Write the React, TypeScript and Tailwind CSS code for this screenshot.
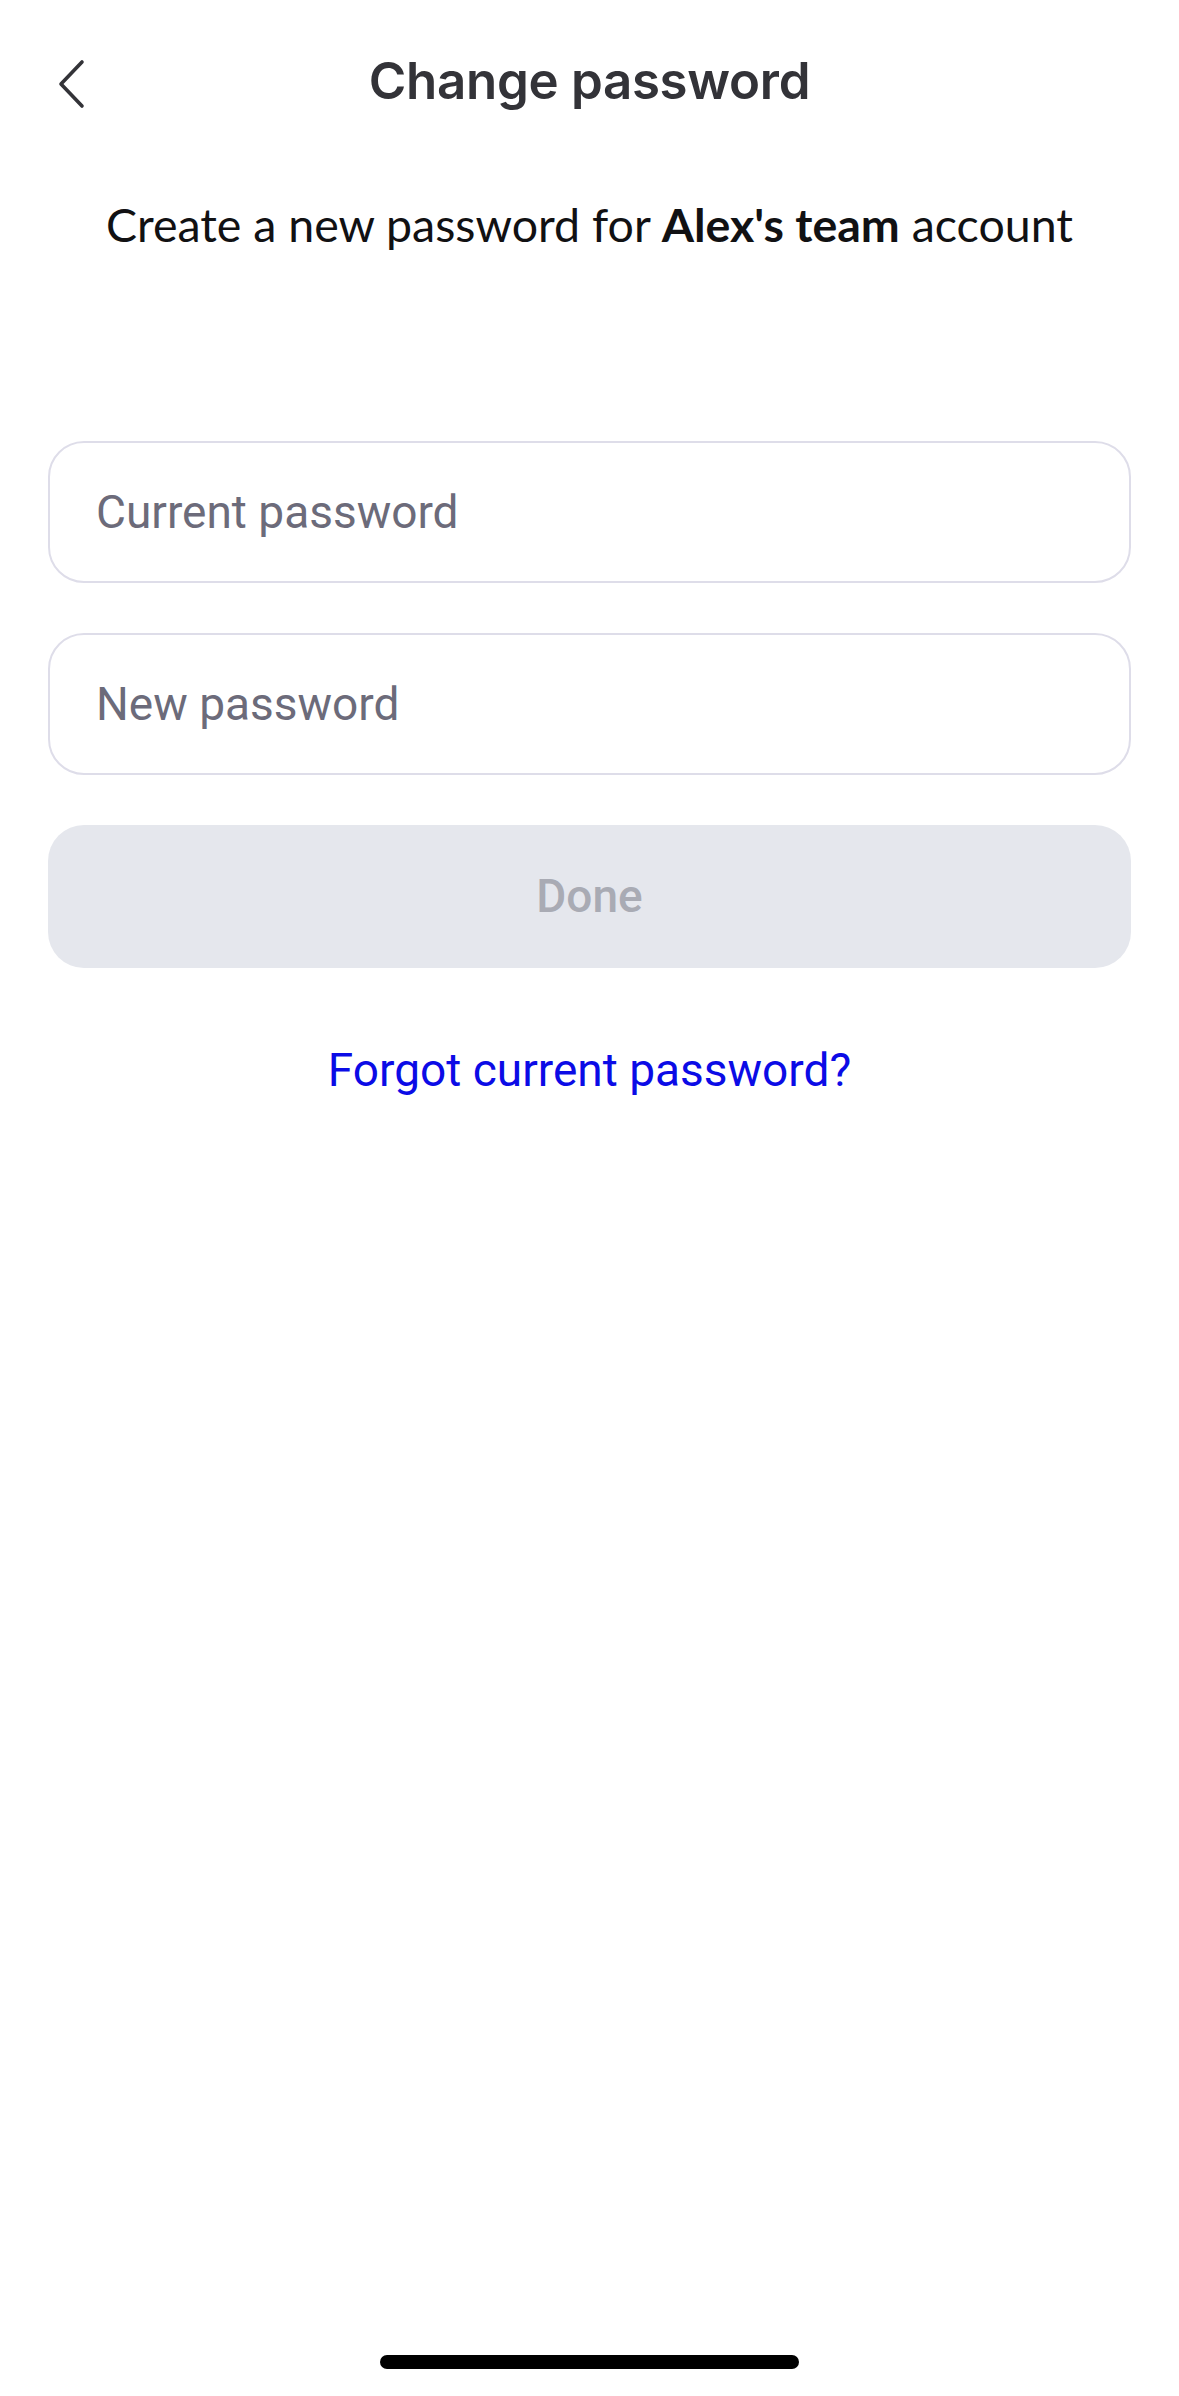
function Field({ placeholder }: { placeholder: string }) {
  return (
    <div className="flex h-[142px] items-center rounded-[36px] border-2 border-[#dedde9] bg-white px-[46px]">
      <input
        type="password"
        placeholder={placeholder}
        className="w-full bg-transparent font-['Roboto',sans-serif] text-[46px] text-[#1d1d24] outline-none placeholder:text-[#6c6b7a]"
      />
    </div>
  )
}

export default function App() {
  return (
    <div className="relative flex min-h-[2396px] w-[1179px] flex-col bg-white font-['Inter',sans-serif]">
      <header className="relative flex h-[162px] items-center justify-center">
        <button
          type="button"
          aria-label="Back"
          className="absolute left-[52px] top-[58px] flex h-[52px] w-[36px] items-center justify-center text-[#333338]"
        >
          <svg width="30" height="50" viewBox="0 0 30 50" fill="none">
            <polyline
              points="27,3 6,25 27,47"
              stroke="currentColor"
              strokeWidth="3.6"
              strokeLinecap="round"
              strokeLinejoin="round"
            />
          </svg>
        </button>
        <h1 className="text-[51px] font-semibold tracking-[-0.3px] text-[#333338]">Change password</h1>
      </header>

      <p className="mt-[32px] text-center font-['Lato',sans-serif] text-[46.5px] leading-[60px] text-[#111113]">
        Create a new password for <span className="font-bold">Alex's team</span> account
      </p>

      <form className="mx-[48px] mt-[187px] flex flex-col gap-[50px]">
        <Field placeholder="Current password" />
        <Field placeholder="New password" />
        <button
          type="button"
          disabled
          className="h-[143px] rounded-[36px] bg-[#e5e7ed] font-['Roboto',sans-serif] text-[46px] font-medium text-[#a9abb4]"
        >
          Done
        </button>
      </form>

      <a
        href="#"
        className="mt-[72px] self-center font-['Roboto',sans-serif] text-[46px] leading-[60px] text-[#0b0be6]"
      >
        Forgot current password?
      </a>

      <div className="absolute bottom-[27px] left-[380px] h-[14px] w-[419px] rounded-full bg-black" />
    </div>
  )
}
